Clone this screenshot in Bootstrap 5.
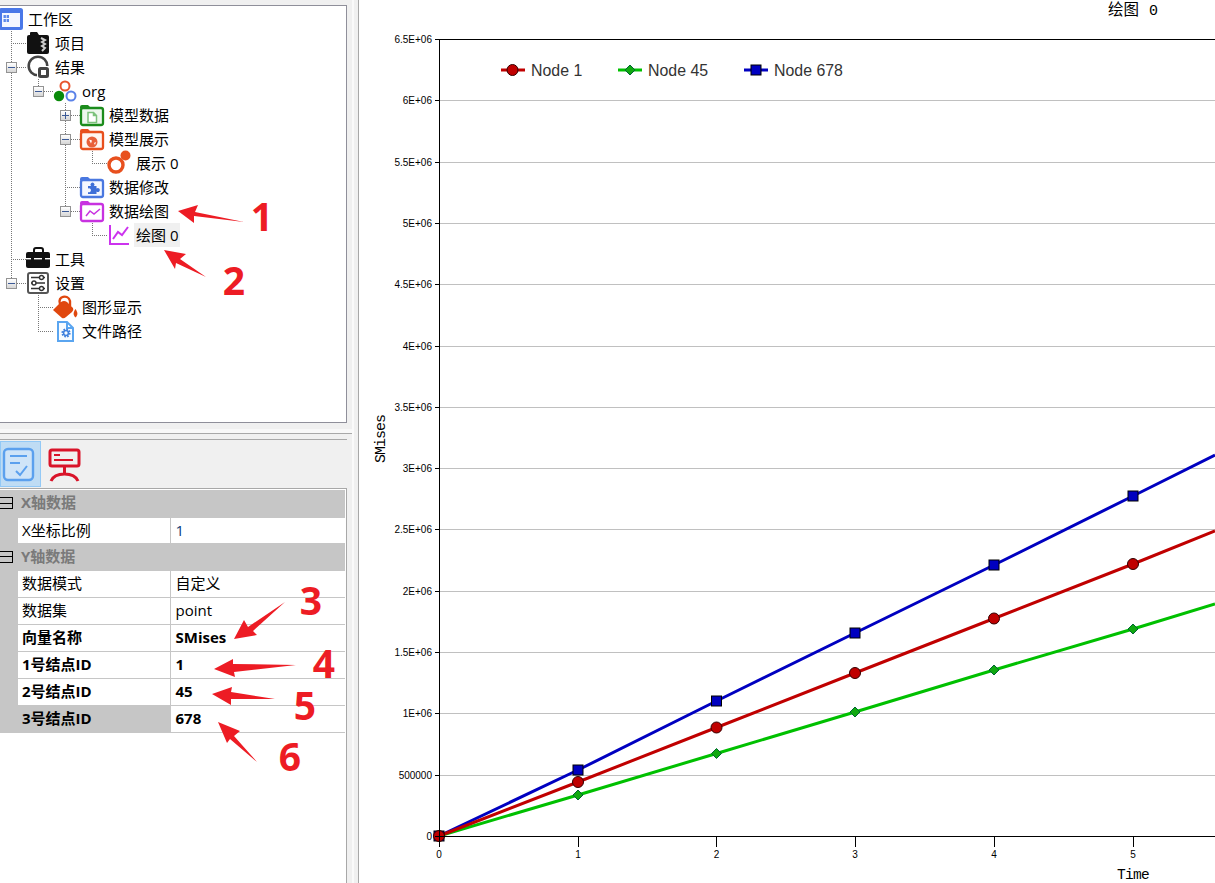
<!DOCTYPE html>
<html lang="zh">
<head>
<meta charset="UTF-8">
<meta name="viewport" content="width=device-width, initial-scale=1.0">
<title>绘图 0</title>
<link href="https://cdn.jsdelivr.net/npm/bootstrap@5.3.0/dist/css/bootstrap.min.css" rel="stylesheet">
<style>
    html, body { height: 100%; }
    body {
        background: #f0f0f0;
        overflow: hidden;
        font-family: "Open Sans", "Noto Sans CJK SC", sans-serif;
        font-size: 15px;
        color: #000;
    }
    .app-frame { width: 1215px; height: 883px; }

    /* left side */
    .left-pane { width: 358px; flex: none; position: relative; }
    .left-stack { width: 352px; padding-top: 5px; }
    .left-strip { width: 2px; background: #fafafa; }
    .tree-box {
        width: 347px;
        height: 418px;
        background: #fff;
        border: 1px solid #8f8f9a;
        border-left: 0;
        padding-top: 1px;
    }
    .tree-row { height: 24px; line-height: 24px; white-space: nowrap; }
    .tree-cell { width: 27px; height: 24px; flex: none; padding: 7px 0 0 6px; }
    .gv { background: repeating-linear-gradient(#777 0 1px, transparent 1px 2px) 11px 0 / 1px 24px no-repeat; }
    .gt {
        background:
            repeating-linear-gradient(#777 0 1px, transparent 1px 2px) 11px 0 / 1px 24px no-repeat,
            repeating-linear-gradient(90deg, #777 0 1px, transparent 1px 2px) 11px 12px / 16px 1px no-repeat;
    }
    .gl {
        background:
            repeating-linear-gradient(#777 0 1px, transparent 1px 2px) 11px 0 / 1px 12px no-repeat,
            repeating-linear-gradient(90deg, #777 0 1px, transparent 1px 2px) 11px 12px / 16px 1px no-repeat;
    }
    .tbox {
        display: block;
        width: 11px;
        height: 11px;
        border: 1px solid #939393;
        background:
            linear-gradient(#3c5a96, #3c5a96) center / 7px 1px no-repeat,
            linear-gradient(#fff, #d6d6d6);
    }
    .tbox-plus {
        background:
            linear-gradient(#3c5a96, #3c5a96) center / 7px 1px no-repeat,
            linear-gradient(#3c5a96, #3c5a96) center / 1px 7px no-repeat,
            linear-gradient(#fff, #d6d6d6);
    }
    .tree-ic { width: 26px; height: 24px; flex: none; overflow: visible; }
    .tree-label { padding: 0 2px; height: 24px; }
    .tree-current { background: #f0f0f0; }

    .split-bar {
        height: 11px;
        background: linear-gradient(#f0f0f0 6px, #f8f8f8 6px);
        border-bottom: 1px solid #a8a8a8;
    }
    .split-gap { height: 5px; }
    .tool-row { width: 347px; height: 49px; border-top: 1px solid #a8a8a8; padding-top: 1px; }
    .tool-btn { width: 41px; height: 46px; padding: 0; border-radius: 0; border: 1px solid transparent; }
    .tool-btn-on, .tool-btn-on:hover { background: #bfdcf4; border-color: #93c9f6; }
    .tool-btn svg { display: block; }

    .grid-box {
        width: 347px;
        background: #fff;
        border-top: 1px solid #a8a8a8;
        border-right: 1px solid #a8a8a8;
        padding: 1px 1px 0 0;
    }
    .prop-grid { table-layout: fixed; width: 100%; }
    .prop-grid > tbody > tr > td {
        height: 27px;
        padding: 0 0 0 4px;
        line-height: 25px;
        color: #000;
        background: #fff;
        border: 0;
        border-bottom: 1px solid #c6c6c6;
        box-shadow: none;
        white-space: nowrap;
    }
    .prop-grid > tbody > tr.prop-short > td { height: 26px; }
    .prop-grid > tbody > tr > td.prop-name { border-right: 1px solid #c6c6c6; }
    .prop-grid > tbody > tr > td.prop-gut,
    .prop-grid > tbody > tr > td.prop-sel { background: #c6c6c6; }
    .prop-grid > tbody > tr > td.prop-head {
        background: #c6c6c6;
        color: #7a7a7a;
        font-weight: 700;
        padding-left: 0;
    }
    .prop-grid > tbody > tr > td.prop-val { padding-left: 5px; }
    .prop-grid > tbody > tr > td.prop-num { color: #0a3a78; }
    .head-box {
        display: inline-block;
        width: 13px;
        height: 12px;
        margin-right: 8px;
        vertical-align: -1px;
        border: 1px solid #000;
        border-left: 0;
        background: linear-gradient(#000, #000) center / 100% 1px no-repeat;
    }

    /* chart */
    .chart-pane { flex: 1 1 auto; background: #fff; border-left: 1px solid #a8a8a8; }
    .chart-svg { display: block; }
    .tick-y { font: 10px "Liberation Sans", sans-serif; text-anchor: end; fill: #000; }
    .tick-x { font: 10px "Liberation Sans", sans-serif; text-anchor: middle; fill: #000; }
    .legend-txt { font: 15.9px "Liberation Sans", sans-serif; fill: #333; }
    .axis-txt { font: 15px "Liberation Mono", monospace; letter-spacing: -1px; fill: #000; }
    .axis-time { font-size: 14.5px; letter-spacing: -0.7px; }
    .title-txt { font: 15.5px "Liberation Sans", "Noto Sans CJK SC", sans-serif; fill: #000; }
    .grid-l { stroke: #c0c0c0; stroke-width: 1; shape-rendering: crispEdges; }
    .axis-l { stroke: #000; stroke-width: 1; shape-rendering: crispEdges; }

    /* red notes on top of the left side */
    .note-layer { position: absolute; left: 0; top: 0; pointer-events: none; }
    .note-num { font: 700 39px "Noto Sans", sans-serif; fill: #ed1c24; text-anchor: middle; }
</style>
</head>
<body>
<svg width="0" height="0" class="d-block position-absolute">
    <symbol id="folder" viewBox="-1 2 24 21" overflow="visible">
        <rect x="0" y="5" width="22" height="17" rx="2" fill="var(--tint)" stroke="currentColor" stroke-width="2.300"/>
        <path d="M-1 7V4Q-1 2 1 2H7L10 5H-1Z" fill="currentColor"/>
    </symbol>
</svg>

<div class="app-frame d-flex">
    <div class="left-pane d-flex">
        <div class="left-stack d-flex flex-column">
            <div class="tree-box">
                <div class="tree-row d-flex">
                    <svg class="tree-ic" viewBox="0 0 26 24"><rect x="0.500" y="2.500" width="21" height="19" rx="1" fill="#f4f7ff" stroke="#4a78e8" stroke-width="3"/><rect x="0" y="2" width="22" height="4" fill="#4a78e8"/><path d="M3.500 8h2.400v3H3.500zM6.600 8H9v3H6.600zM3.500 12h2.400v3H3.500zM6.600 12H9v3H6.600z" fill="#5c88ea"/></svg>
                    <span class="tree-label">工作区</span>
                </div>
                <div class="tree-row d-flex">
                    <div class="tree-cell gt"></div>
                    <svg class="tree-ic" viewBox="0 0 26 24"><path d="M3 4V2Q3 1 4 1H10L12 4Z" fill="#111"/><rect x="0" y="4" width="22" height="19" rx="2" fill="#111"/><polyline points="14,7 18,9 15,11 18,13 15,15 18,17 15,20" fill="none" stroke="#ccc" stroke-width="2"/></svg>
                    <span class="tree-label">项目</span>
                </div>
                <div class="tree-row d-flex">
                    <div class="tree-cell gt"><span class="tbox"></span></div>
                    <svg class="tree-ic" viewBox="0 0 26 24"><circle cx="11" cy="11" r="9.300" fill="none" stroke="#444" stroke-width="2.600"/><rect x="10" y="11" width="13" height="12" fill="#fff"/><rect x="12.500" y="13.500" width="8" height="8" rx="1" fill="#fff" stroke="#444" stroke-width="3"/></svg>
                    <span class="tree-label">结果</span>
                </div>
                <div class="tree-row d-flex">
                    <div class="tree-cell gv"></div>
                    <div class="tree-cell gl"><span class="tbox"></span></div>
                    <svg class="tree-ic" viewBox="0 0 26 24"><circle cx="11" cy="7" r="4.500" fill="#fff" stroke="#e8552e" stroke-width="2"/><circle cx="17" cy="17" r="4.500" fill="#fff" stroke="#5a82e8" stroke-width="2"/><circle cx="5" cy="17" r="5.200" fill="#0a8a0a"/></svg>
                    <span class="tree-label">org</span>
                </div>
                <div class="tree-row d-flex">
                    <div class="tree-cell gv"></div>
                    <div class="tree-cell"></div>
                    <div class="tree-cell gt"><span class="tbox tbox-plus"></span></div>
                    <svg class="tree-ic" viewBox="0 0 26 24" style="--tint:#eef8ee;color:#1c8c1c"><use href="#folder" x="-1" y="2" width="24" height="21"/><path d="M7 9.500H12.500L15.500 12.500V19.500H7ZM12.500 9.500V12.500H15.500" fill="#fff" stroke="#7cc27c" stroke-width="1.500"/></svg>
                    <span class="tree-label">模型数据</span>
                </div>
                <div class="tree-row d-flex">
                    <div class="tree-cell gv"></div>
                    <div class="tree-cell"></div>
                    <div class="tree-cell gt"><span class="tbox"></span></div>
                    <svg class="tree-ic" viewBox="0 0 26 24" style="--tint:#fff6f2;color:#e8501e"><use href="#folder" x="-1" y="2" width="24" height="21"/><circle cx="11" cy="15" r="5.500" fill="#e8603a"/><path d="M8 12.500l3 1-1 3zM13 16l2-1-1 3z" fill="#fff"/></svg>
                    <span class="tree-label">模型展示</span>
                </div>
                <div class="tree-row d-flex">
                    <div class="tree-cell gv"></div>
                    <div class="tree-cell"></div>
                    <div class="tree-cell gv"></div>
                    <div class="tree-cell gl"></div>
                    <svg class="tree-ic" viewBox="0 0 26 24"><circle cx="8" cy="14" r="7" fill="none" stroke="#e8501e" stroke-width="3.400"/><circle cx="17.500" cy="4.500" r="5" fill="#e8501e"/></svg>
                    <span class="tree-label">展示 0</span>
                </div>
                <div class="tree-row d-flex">
                    <div class="tree-cell gv"></div>
                    <div class="tree-cell"></div>
                    <div class="tree-cell gt"></div>
                    <svg class="tree-ic" viewBox="0 0 26 24" style="--tint:#f4f7ff;color:#4a78e0"><use href="#folder" x="-1" y="2" width="24" height="21"/><path d="M7 11H10a2 2 0 1 1 3 0H15.500V13.500a2 2 0 1 1 0 3V19H7V17a2 2 0 1 0 0-3.500Z" fill="#3e6fd8"/></svg>
                    <span class="tree-label">数据修改</span>
                </div>
                <div class="tree-row d-flex">
                    <div class="tree-cell gv"></div>
                    <div class="tree-cell"></div>
                    <div class="tree-cell gl"><span class="tbox"></span></div>
                    <svg class="tree-ic" viewBox="0 0 26 24" style="--tint:#fff;color:#c832e0"><use href="#folder" x="-1" y="2" width="24" height="21"/><polyline points="5,17 9,12 13,15 19,10" fill="none" stroke="#c832e0" stroke-width="1.500"/></svg>
                    <span class="tree-label">数据绘图</span>
                </div>
                <div class="tree-row d-flex">
                    <div class="tree-cell gv"></div>
                    <div class="tree-cell"></div>
                    <div class="tree-cell"></div>
                    <div class="tree-cell gl"></div>
                    <svg class="tree-ic" viewBox="0 0 26 24"><path d="M2 2V21H21" fill="none" stroke="#cc33ee" stroke-width="2"/><polyline points="5,16 10,9 14,12 20,4" fill="none" stroke="#cc33ee" stroke-width="2"/></svg>
                    <span class="tree-label tree-current">绘图 0</span>
                </div>
                <div class="tree-row d-flex">
                    <div class="tree-cell gt"></div>
                    <svg class="tree-ic" viewBox="0 0 26 24"><path d="M7 5V3Q7 1 9 1H14Q16 1 16 3V5" fill="none" stroke="#111" stroke-width="2"/><rect x="-1" y="5" width="24" height="16" rx="2" fill="#111"/><rect x="-1" y="11" width="24" height="1.400" fill="#fff"/><rect x="4" y="9.500" width="3" height="4" fill="#111"/><rect x="15" y="9.500" width="3" height="4" fill="#111"/></svg>
                    <span class="tree-label">工具</span>
                </div>
                <div class="tree-row d-flex">
                    <div class="tree-cell gl"><span class="tbox"></span></div>
                    <svg class="tree-ic" viewBox="0 0 26 24"><rect x="1" y="2" width="20" height="20" rx="2" fill="#fff" stroke="#555" stroke-width="2"/><path d="M4 6.500H18M4 12H18M4 17.500H18" stroke="#333" stroke-width="1.400"/><circle cx="14.500" cy="6.500" r="2" fill="#fff" stroke="#333" stroke-width="1.400"/><circle cx="7" cy="12" r="2" fill="#fff" stroke="#333" stroke-width="1.400"/><circle cx="14.500" cy="17.500" r="2" fill="#fff" stroke="#333" stroke-width="1.400"/></svg>
                    <span class="tree-label">设置</span>
                </div>
                <div class="tree-row d-flex">
                    <div class="tree-cell"></div>
                    <div class="tree-cell gt"></div>
                    <svg class="tree-ic" viewBox="0 0 26 24"><path d="M-1 15L7 7Q10 5 13 7L19 13Q20 15 18 17L12 22Q10 24 8 23Z" fill="#e0470e"/><path d="M6 9C3 1 14-1 16 6V11" fill="none" stroke="#e0470e" stroke-width="2.400"/><path d="M21.500 14c2 3 3 5.500 0 8.500c-3-3-2-5.500 0-8.500Z" fill="#e0470e"/></svg>
                    <span class="tree-label">图形显示</span>
                </div>
                <div class="tree-row d-flex">
                    <div class="tree-cell"></div>
                    <div class="tree-cell gl"></div>
                    <svg class="tree-ic" viewBox="0 0 26 24"><path d="M4 3H13L19 9V22H4ZM13 3V9H19" fill="#f7fbff" stroke="#5aa5f0" stroke-width="2"/><circle cx="12" cy="14" r="3.600" fill="none" stroke="#3f80dd" stroke-width="2" stroke-dasharray="1.600 1.200"/><circle cx="12" cy="14" r="2.400" fill="none" stroke="#3f80dd" stroke-width="1.500"/></svg>
                    <span class="tree-label">文件路径</span>
                </div>
            </div>

            <div class="split-bar"></div>
            <div class="split-gap"></div>

            <div class="tool-row d-flex">
                <button type="button" class="btn tool-btn tool-btn-on">
                    <svg width="39" height="44" viewBox="1 442 39 44"><rect x="4" y="449" width="29" height="31" rx="4" fill="#cfe4f8" stroke="#5ba0ee" stroke-width="2.400"/><path d="M10 456H27M10 463H20" stroke="#5ba0ee" stroke-width="2"/><path d="M16 471L20 475 27 466" fill="none" stroke="#5ba0ee" stroke-width="2"/></svg>
                </button>
                <button type="button" class="btn tool-btn ms-1">
                    <svg width="39" height="44" viewBox="46 442 39 44"><rect x="50" y="450" width="29" height="16" rx="2" fill="none" stroke="#d9142a" stroke-width="3"/><path d="M54 455H60M54 460H73" stroke="#d9142a" stroke-width="2"/><path d="M64.500 466V474M51 481Q54 474 64.500 474Q75 474 78 481" fill="none" stroke="#d9142a" stroke-width="3"/></svg>
                </button>
            </div>

            <div class="grid-box flex-grow-1">
                <table class="table mb-0 prop-grid">
                    <colgroup><col style="width:18px"><col style="width:152px"><col></colgroup>
                    <tbody>
                        <tr><td class="prop-head" colspan="3"><span class="head-box"></span>X轴数据</td></tr>
                        <tr class="prop-short"><td class="prop-gut"></td><td class="prop-name">X坐标比例</td><td class="prop-val prop-num">1</td></tr>
                        <tr><td class="prop-head" colspan="3"><span class="head-box"></span>Y轴数据</td></tr>
                        <tr><td class="prop-gut"></td><td class="prop-name">数据模式</td><td class="prop-val">自定义</td></tr>
                        <tr><td class="prop-gut"></td><td class="prop-name">数据集</td><td class="prop-val">point</td></tr>
                        <tr class="fw-bold"><td class="prop-gut"></td><td class="prop-name">向量名称</td><td class="prop-val">SMises</td></tr>
                        <tr class="fw-bold"><td class="prop-gut"></td><td class="prop-name">1号结点ID</td><td class="prop-val">1</td></tr>
                        <tr class="fw-bold"><td class="prop-gut"></td><td class="prop-name">2号结点ID</td><td class="prop-val">45</td></tr>
                        <tr class="fw-bold"><td class="prop-gut"></td><td class="prop-name prop-sel">3号结点ID</td><td class="prop-val">678</td></tr>
                    </tbody>
                </table>
            </div>
        </div>
        <div class="left-strip"></div>

        <svg class="note-layer" width="358" height="883" viewBox="0 0 358 883">
            <g fill="#ed1c24">
                <polygon points="178,211 198,205 195,212 244,222 194,216 194,223"/>
                <polygon points="164,250 186,254 180,259 206,277 176,263 175,269"/>
                <polygon points="234,639 244,620 248,627 285,602 253,631 257,635"/>
                <polygon points="214,669 233,659 233,664 296,665 234,672 235,677"/>
                <polygon points="212,694 232,687 231,692 275,699 231,699 231,705"/>
                <polygon points="218,722 240,731 234,736 257,762 230,739 227,743"/>
            </g>
            <text class="note-num" x="262" y="231">1</text>
            <text class="note-num" x="234" y="295">2</text>
            <text class="note-num" x="311" y="615">3</text>
            <text class="note-num" x="324" y="678">4</text>
            <text class="note-num" x="305" y="720">5</text>
            <text class="note-num" x="290" y="771">6</text>
        </svg>
    </div>

    <div class="chart-pane">
        <svg class="chart-svg" width="856" height="883" viewBox="359 0 856 883">
            <text class="title-txt" x="1108" y="15">绘图</text>
            <text class="axis-txt" x="1149" y="14.500">0</text>

            <g class="grid-lines">
                <line class="grid-l" x1="439" x2="1215" y1="100.500" y2="100.500"/>
                <line class="grid-l" x1="439" x2="1215" y1="162.500" y2="162.500"/>
                <line class="grid-l" x1="439" x2="1215" y1="223.500" y2="223.500"/>
                <line class="grid-l" x1="439" x2="1215" y1="284.500" y2="284.500"/>
                <line class="grid-l" x1="439" x2="1215" y1="346.500" y2="346.500"/>
                <line class="grid-l" x1="439" x2="1215" y1="407.500" y2="407.500"/>
                <line class="grid-l" x1="439" x2="1215" y1="468.500" y2="468.500"/>
                <line class="grid-l" x1="439" x2="1215" y1="529.500" y2="529.500"/>
                <line class="grid-l" x1="439" x2="1215" y1="591.500" y2="591.500"/>
                <line class="grid-l" x1="439" x2="1215" y1="652.500" y2="652.500"/>
                <line class="grid-l" x1="439" x2="1215" y1="713.500" y2="713.500"/>
                <line class="grid-l" x1="439" x2="1215" y1="775.500" y2="775.500"/>
            </g>

            <g fill="none" stroke-width="3">
                <polyline stroke="#0000c0" points="439,836 578,770 716.500,701 855,633 994,565 1133,496 1215,455"/>
                <polyline stroke="#00c000" points="439,836 578,795 716.500,753.500 855,712 994,670 1133,629 1215,604"/>
                <polyline stroke="#c00000" points="439,836 578,782 716.500,727.500 855,673 994,618.500 1133,564 1215,531"/>
            </g>

            <g fill="#0000c0" stroke="#000" stroke-width="1">
                <rect x="434" y="831" width="10" height="10"/>
                <rect x="573" y="765" width="10" height="10"/>
                <rect x="711.500" y="696" width="10" height="10"/>
                <rect x="850" y="628" width="10" height="10"/>
                <rect x="989" y="560" width="10" height="10"/>
                <rect x="1128" y="491" width="10" height="10"/>
            </g>
            <g fill="#10a810" stroke="#063" stroke-width="1">
                <polygon points="578,790 583,795 578,800 573,795"/>
                <polygon points="716.500,748.500 721.500,753.500 716.500,758.500 711.500,753.500"/>
                <polygon points="855,707 860,712 855,717 850,712"/>
                <polygon points="994,665 999,670 994,675 989,670"/>
                <polygon points="1133,624 1138,629 1133,634 1128,629"/>
            </g>
            <g fill="#c00000" stroke="#300" stroke-width="1">
                <circle cx="439" cy="836" r="5.500"/>
                <circle cx="578" cy="782" r="5.500"/>
                <circle cx="716.500" cy="727.500" r="5.500"/>
                <circle cx="855" cy="673" r="5.500"/>
                <circle cx="994" cy="618.500" r="5.500"/>
                <circle cx="1133" cy="564" r="5.500"/>
            </g>

            <g>
                <line class="axis-l" x1="435" x2="1215" y1="39.500" y2="39.500"/>
                <line class="axis-l" x1="435" x2="1215" y1="836.500" y2="836.500"/>
                <line class="axis-l" x1="439.500" x2="439.500" y1="39" y2="847"/>
                <path class="axis-l" fill="none" d="M435 100.500H439M435 162.500H439M435 223.500H439M435 284.500H439M435 346.500H439M435 407.500H439M435 468.500H439M435 529.500H439M435 591.500H439M435 652.500H439M435 713.500H439M435 775.500H439"/>
                <path class="axis-l" fill="none" d="M578.500 836V847M716.500 836V847M855.500 836V847M994.500 836V847M1133.500 836V847"/>
            </g>

            <g>
                <text class="tick-y" x="432" y="43">6.5E+06</text>
                <text class="tick-y" x="432" y="104">6E+06</text>
                <text class="tick-y" x="432" y="166">5.5E+06</text>
                <text class="tick-y" x="432" y="227">5E+06</text>
                <text class="tick-y" x="432" y="288">4.5E+06</text>
                <text class="tick-y" x="432" y="350">4E+06</text>
                <text class="tick-y" x="432" y="411">3.5E+06</text>
                <text class="tick-y" x="432" y="472">3E+06</text>
                <text class="tick-y" x="432" y="533">2.5E+06</text>
                <text class="tick-y" x="432" y="595">2E+06</text>
                <text class="tick-y" x="432" y="656">1.5E+06</text>
                <text class="tick-y" x="432" y="717">1E+06</text>
                <text class="tick-y" x="432" y="779">500000</text>
                <text class="tick-y" x="432" y="840">0</text>
            </g>
            <g>
                <text class="tick-x" x="439" y="858">0</text>
                <text class="tick-x" x="578" y="858">1</text>
                <text class="tick-x" x="716.500" y="858">2</text>
                <text class="tick-x" x="855" y="858">3</text>
                <text class="tick-x" x="994" y="858">4</text>
                <text class="tick-x" x="1133" y="858">5</text>
            </g>

            <text class="axis-txt axis-time" text-anchor="middle" x="1133" y="878.600">Time</text>
            <text class="axis-txt" text-anchor="middle" transform="translate(385 439) rotate(-90)">SMises</text>

            <g>
                <line x1="501" x2="525" y1="70" y2="70" stroke="#c00000" stroke-width="3"/>
                <circle cx="512.500" cy="70" r="5.500" fill="#c00000" stroke="#300"/>
                <text class="legend-txt" x="531" y="75.500">Node 1</text>
                <line x1="618" x2="642" y1="70" y2="70" stroke="#00c000" stroke-width="3"/>
                <polygon points="630,65 635,70 630,75 625,70" fill="#10a810" stroke="#063"/>
                <text class="legend-txt" x="648" y="75.500">Node 45</text>
                <line x1="744" x2="768" y1="70" y2="70" stroke="#0000c0" stroke-width="3"/>
                <rect x="751" y="65" width="10" height="10" fill="#0000c0" stroke="#000"/>
                <text class="legend-txt" x="774" y="75.500">Node 678</text>
            </g>
        </svg>
    </div>
</div>
<script src="https://cdn.jsdelivr.net/npm/bootstrap@5.3.0/dist/js/bootstrap.bundle.min.js"></script>
</body>
</html>
